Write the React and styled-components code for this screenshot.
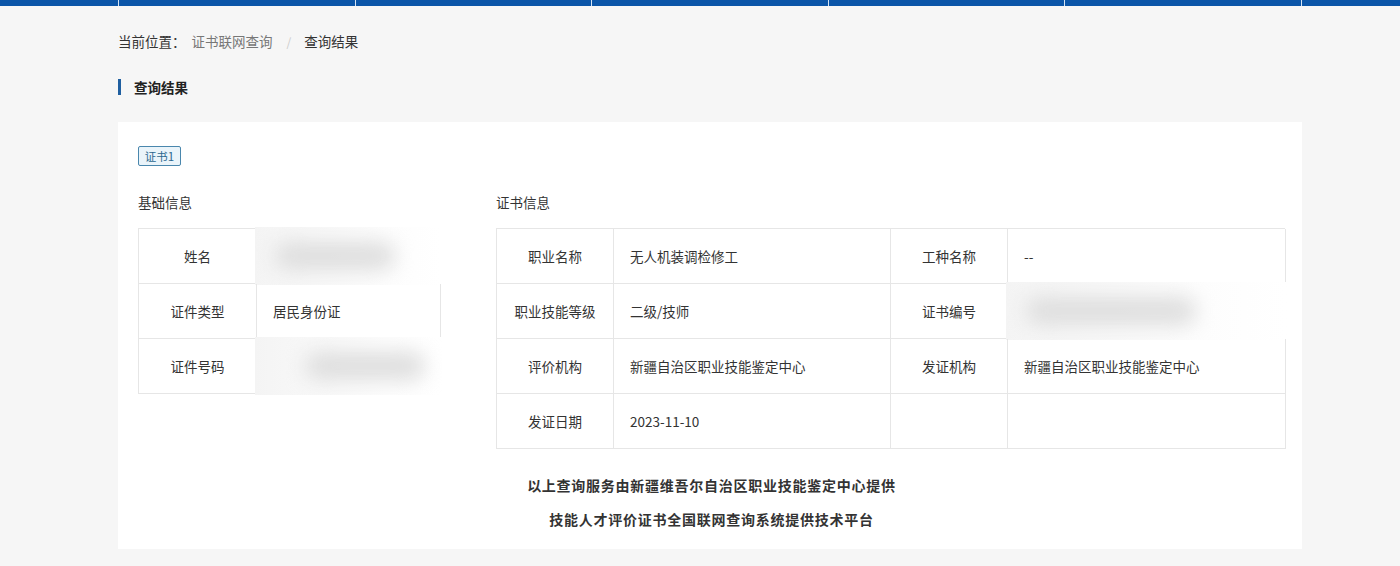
import React from 'react';
import styled, { createGlobalStyle } from 'styled-components';

const GlobalStyle = createGlobalStyle`
  html, body {
    margin: 0;
    padding: 0;
    background: #f6f6f6;
    font-family: "Noto Sans CJK SC", "Noto Sans", "Liberation Sans", sans-serif;
    color: #333;
  }
`;

const NavBar = styled.div`
  height: 6px;
  background: #0b55a8;
`;

const NavInner = styled.div`
  width: 1184px;
  margin-left: 118px;
  height: 100%;
  display: flex;
`;

const NavItem = styled.div`
  flex: 1;
  border-left: 1px solid #d6e4f3;
  &:last-child {
    border-right: 1px solid #d6e4f3;
  }
`;

const Container = styled.div`
  width: 1184px;
  margin-left: 118px;
`;

const Breadcrumb = styled.div`
  display: flex;
  align-items: center;
  height: 20px;
  margin-top: 25px;
  font-size: 13.5px;
  color: #333;
`;

const Crumb = styled.span`
  color: ${(p) => (p.$muted ? '#777' : '#333')};
  margin-right: ${(p) => (p.$lead ? '6px' : '0')};
`;

const Sep = styled.span`
  color: #ccc;
  margin: 0 13px 0 14px;
  font-size: 12px;
`;

const SectionTitle = styled.div`
  display: flex;
  align-items: center;
  gap: 13px;
  margin-top: 26px;
  height: 20px;
  font-size: 13.5px;
  font-weight: 700;
  color: #222;

  &::before {
    content: '';
    width: 3px;
    height: 16px;
    background: #1f5fa0;
  }
`;

const Card = styled.div`
  margin-top: 25px;
  background: #fff;
  padding: 20px 17px 13px 20px;
`;

const Tag = styled.div`
  display: inline-flex;
  align-items: center;
  justify-content: center;
  width: 43px;
  height: 20px;
  box-sizing: border-box;
  border: 1px solid #4a87ad;
  border-radius: 2px;
  background: #eaf4fa;
  color: #2c6890;
  font-size: 11.5px;
`;

const Columns = styled.div`
  display: grid;
  grid-template-columns: 302px 789px;
  gap: 56px;
  margin-top: 26px;
  align-items: start;
`;

const GroupTitle = styled.div`
  font-size: 13.5px;
  line-height: 20px;
  color: #333;
  margin-bottom: 16px;
`;

const Table = styled.div`
  display: grid;
  grid-template-columns: ${(p) => p.$cols};
  border-top: 1px solid #e6e6e6;
  border-left: 1px solid #e6e6e6;
`;

const Cell = styled.div`
  position: relative;
  height: 55px;
  box-sizing: border-box;
  border-right: 1px solid #e6e6e6;
  border-bottom: 1px solid #e6e6e6;
  display: flex;
  align-items: center;
  justify-content: ${(p) => (p.$label ? 'center' : 'flex-start')};
  padding: ${(p) => (p.$label ? '0' : '0 16px')};
  font-size: 13.5px;
  color: #333;
  white-space: nowrap;
`;

const Blur = styled.div`
  position: absolute;
  left: -2px;
  right: -2px;
  top: -2px;
  bottom: -2px;
  background: linear-gradient(90deg, #f4f4f4, #fdfdfd 70%, #fff);
  overflow: hidden;

  &::after {
    content: '';
    position: absolute;
    left: ${(p) => p.$from}px;
    width: ${(p) => p.$w}px;
    top: 50%;
    height: 28px;
    margin-top: -14px;
    border-radius: 14px;
    background: #dedede;
    filter: blur(10px);
  }
`;

const Footer = styled.div`
  margin-top: 19px;
  text-align: center;
  font-size: 14px;
  letter-spacing: 0.75px;
  font-weight: 700;
  line-height: 34px;
  color: #333;
`;

const basicRows = [
  { label: '姓名', blur: { from: 20, w: 120 } },
  { label: '证件类型', value: '居民身份证' },
  { label: '证件号码', blur: { from: 50, w: 120 } },
];

const certRows = [
  [
    { label: '职业名称', value: '无人机装调检修工' },
    { label: '工种名称', value: '--' },
  ],
  [
    { label: '职业技能等级', value: '二级/技师' },
    { label: '证书编号', blur: { from: 20, w: 170 } },
  ],
  [
    { label: '评价机构', value: '新疆自治区职业技能鉴定中心' },
    { label: '发证机构', value: '新疆自治区职业技能鉴定中心' },
  ],
  [
    { label: '发证日期', value: '2023-11-10' },
    { label: '', value: '' },
  ],
];

const renderPair = (item, key) => [
  <Cell $label key={`${key}-l`}>{item.label}</Cell>,
  <Cell key={`${key}-v`}>
    {item.blur ? <Blur $from={item.blur.from} $w={item.blur.w} /> : item.value}
  </Cell>,
];

export default function App() {
  return (
    <>
      <GlobalStyle />
      <NavBar>
        <NavInner>
          {[0, 1, 2, 3, 4].map((i) => (
            <NavItem key={i} />
          ))}
        </NavInner>
      </NavBar>
      <Container>
        <Breadcrumb>
          <Crumb $lead>当前位置：</Crumb>
          <Crumb $muted>证书联网查询</Crumb>
          <Sep>/</Sep>
          <Crumb>查询结果</Crumb>
        </Breadcrumb>
        <SectionTitle>查询结果</SectionTitle>
        <Card>
          <Tag>证书1</Tag>
          <Columns>
            <div>
              <GroupTitle>基础信息</GroupTitle>
              <Table $cols="118px 184px">
                {basicRows.map((r, i) => renderPair(r, `b${i}`))}
              </Table>
            </div>
            <div>
              <GroupTitle>证书信息</GroupTitle>
              <Table $cols="117px 277px 117px 278px">
                {certRows.map((row, i) =>
                  row.map((item, j) => renderPair(item, `c${i}-${j}`))
                )}
              </Table>
            </div>
          </Columns>
          <Footer>
            <div>以上查询服务由新疆维吾尔自治区职业技能鉴定中心提供</div>
            <div>技能人才评价证书全国联网查询系统提供技术平台</div>
          </Footer>
        </Card>
      </Container>
    </>
  );
}
